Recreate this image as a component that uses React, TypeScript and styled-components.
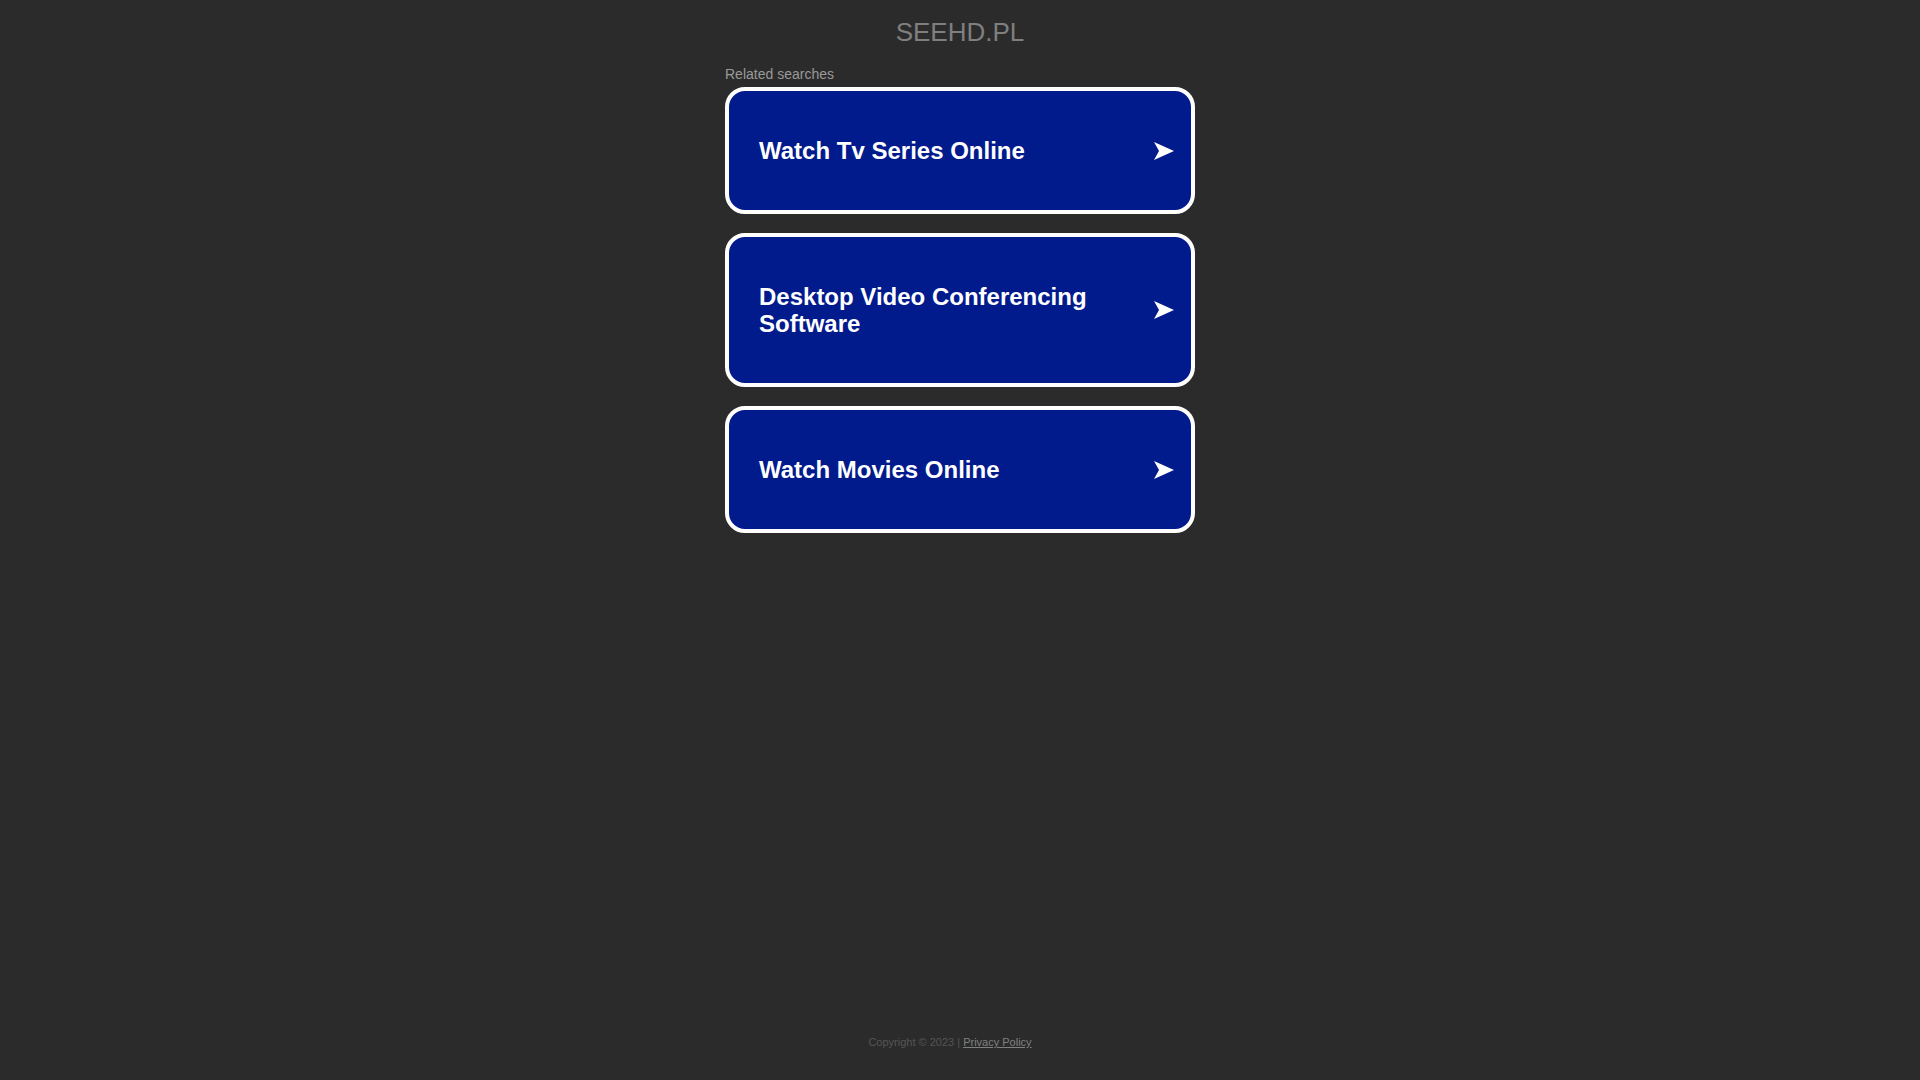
import styled, { createGlobalStyle } from "styled-components";

const GlobalStyle = createGlobalStyle`
  html, body {
    margin: 0;
    padding: 0;
    background: #2b2b2b;
    font-family: "Liberation Sans", Arial, sans-serif;
  }
`;

const searches = [
  "Watch Tv Series Online",
  "Desktop Video Conferencing Software",
  "Watch Movies Online",
];

const Arrow = () => (
  <ArrowIcon width="20" height="18" viewBox="0 0 20 18">
    <path d="M0 0 L20 9 L0 18 L5 9 Z" fill="#fff" />
  </ArrowIcon>
);

const App = () => {
  return (
    <Page>
      <GlobalStyle />
      <Main>
        <Title>SEEHD.PL</Title>
        <Related>
          <RelatedLabel>Related searches</RelatedLabel>
          {searches.map((s) => (
            <SearchCard key={s} href="#">
              <CardText>{s}</CardText>
              <Arrow />
            </SearchCard>
          ))}
        </Related>
      </Main>
      <Footer>
        Copyright © 2023 | <FooterLink href="#">Privacy Policy</FooterLink>
      </Footer>
    </Page>
  );
};

export default App;

const Page = styled.div`
  min-height: 1080px;
  display: flex;
  flex-direction: column;
  align-items: center;
`;

const Main = styled.main`
  flex: 1;
  width: 470px;
  display: flex;
  flex-direction: column;
  align-items: center;
`;

const Title = styled.h1`
  margin: 17px 0 0;
  font-size: 26px;
  line-height: 30px;
  font-weight: normal;
  color: #7f7f7f;
`;

const Related = styled.section`
  width: 100%;
  display: flex;
  flex-direction: column;
  gap: 19px;
  margin-top: 19px;
`;

const RelatedLabel = styled.div`
  font-size: 14px;
  line-height: 16px;
  color: #999;
  margin-bottom: -14px;
`;

const SearchCard = styled.a`
  display: flex;
  align-items: center;
  justify-content: space-between;
  gap: 20px;
  padding: 46px 17px 46px 30px;
  background: #011a8c;
  border: 4px solid #fff;
  border-radius: 20px;
  text-decoration: none;
`;

const CardText = styled.span`
  flex: 1;
  font-size: 24px;
  line-height: 27px;
  font-weight: bold;
  color: #fff;
`;

const ArrowIcon = styled.svg`
  flex-shrink: 0;
`;

const Footer = styled.footer`
  padding: 0 20px 31px 0;
  font-size: 11px;
  line-height: 13px;
  color: #555;
`;

const FooterLink = styled.a`
  color: #808080;
  text-decoration: underline;
`;
